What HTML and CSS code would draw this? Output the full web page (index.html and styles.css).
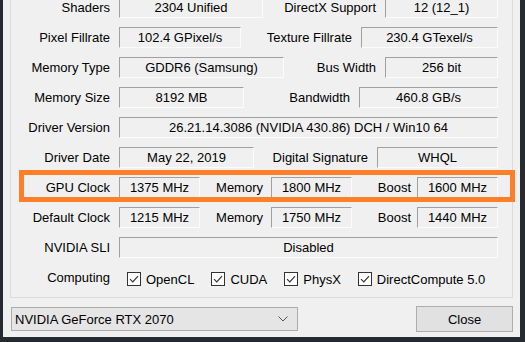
FILE: index.html
```html
<!DOCTYPE html>
<html lang="en">
<head>
  <meta charset="UTF-8">
  <title>GPU-Z</title>
  <link rel="stylesheet" href="styles.css">
</head>
<body>
  <div class="window">
    <div class="group">
      <div class="row">
        <span class="label">Shaders</span>
        <span class="field w144">2304 Unified</span>
        <span class="label2">DirectX Support</span>
        <span class="field w113">12 (12_1)</span>
      </div>
      <div class="row">
        <span class="label">Pixel Fillrate</span>
        <span class="field w122">102.4 GPixel/s</span>
        <span class="label2">Texture Fillrate</span>
        <span class="field w137">230.4 GTexel/s</span>
      </div>
      <div class="row">
        <span class="label">Memory Type</span>
        <span class="field w165">GDDR6 (Samsung)</span>
        <span class="label2">Bus Width</span>
        <span class="field w113">256 bit</span>
      </div>
      <div class="row">
        <span class="label">Memory Size</span>
        <span class="field w125">8192 MB</span>
        <span class="label2">Bandwidth</span>
        <span class="field w139">460.8 GB/s</span>
      </div>
      <div class="row">
        <span class="label">Driver Version</span>
        <span class="field wide">26.21.14.3086 (NVIDIA 430.86) DCH / Win10 64</span>
      </div>
      <div class="row">
        <span class="label">Driver Date</span>
        <span class="field w135">May 22, 2019</span>
        <span class="label2">Digital Signature</span>
        <span class="field w121">WHQL</span>
      </div>
      <div class="row">
        <span class="label">GPU Clock</span>
        <span class="field w81">1375 MHz</span>
        <span class="label-mem">Memory</span>
        <span class="field w81">1800 MHz</span>
        <span class="label-boost">Boost</span>
        <span class="field w81">1600 MHz</span>
      </div>
      <div class="row">
        <span class="label">Default Clock</span>
        <span class="field w81">1215 MHz</span>
        <span class="label-mem">Memory</span>
        <span class="field w81">1750 MHz</span>
        <span class="label-boost">Boost</span>
        <span class="field w81">1440 MHz</span>
      </div>
      <div class="row">
        <span class="label">NVIDIA SLI</span>
        <span class="field wide">Disabled</span>
      </div>
      <div class="row">
        <span class="label">Computing</span>
        <div class="checks">
          <span class="check"><span class="box"><svg viewBox="0 0 12 12"><path d="M2 6.2 L4.8 9 L10 3.2" fill="none" stroke="#333" stroke-width="1.2"/></svg></span>OpenCL</span>
          <span class="check"><span class="box"><svg viewBox="0 0 12 12"><path d="M2 6.2 L4.8 9 L10 3.2" fill="none" stroke="#333" stroke-width="1.2"/></svg></span>CUDA</span>
          <span class="check"><span class="box"><svg viewBox="0 0 12 12"><path d="M2 6.2 L4.8 9 L10 3.2" fill="none" stroke="#333" stroke-width="1.2"/></svg></span>PhysX</span>
          <span class="check"><span class="box"><svg viewBox="0 0 12 12"><path d="M2 6.2 L4.8 9 L10 3.2" fill="none" stroke="#333" stroke-width="1.2"/></svg></span>DirectCompute 5.0</span>
        </div>
      </div>
    </div>

    <div class="bottom">
      <div class="select">
        <span>NVIDIA GeForce RTX 2070</span>
        <svg class="chevron" viewBox="0 0 10 6"><path d="M0.5 0.5 L5 5 L9.5 0.5" fill="none" stroke="#555" stroke-width="1"/></svg>
      </div>
      <button class="button">Close</button>
    </div>

    <!-- highlight box drawn over the clock row -->
    <div class="highlight"></div>
  </div>
</body>
</html>
```

FILE: styles.css
```css
body {
  margin: 0;
  background-color: #262b31;
  font-family: 'Liberation Sans', Arial, sans-serif;
  font-size: 13px;
  color: #000;
  overflow: hidden;
}

.window {
  position: relative;
  margin-left: 3px;
  width: 517px;
  height: 337px;
  background-color: #f0f0f0;
  overflow: hidden;
}

.group {
  margin: -8px 0 0 7px;
  width: 503px;
  box-sizing: border-box;
  border: 1px solid #dcdcdc;
  border-top: none;
  padding: 0 14px 5px 0;
}

.row {
  display: flex;
  height: 30px;
}

.label {
  width: 99px;
  margin-right: 9px;
  text-align: right;
  line-height: 21px;
  margin-top: 5px;
  white-space: nowrap;
}

.label2 {
  flex: 1;
  padding-right: 9px;
  text-align: right;
  line-height: 21px;
  margin-top: 5px;
  white-space: nowrap;
}

.label-mem,
.label-boost {
  box-sizing: border-box;
  text-align: right;
  line-height: 21px;
  margin-top: 5px;
}

.label-mem {
  width: 71px;
  padding-right: 8px;
}

.label-boost {
  width: 65px;
  padding-right: 6px;
}

.field {
  box-sizing: border-box;
  height: 21px;
  margin-top: 5px;
  border: 1px solid;
  border-color: #a0a0a0 #fcfcfc #fcfcfc #a0a0a0;
  text-align: center;
  line-height: 19px;
  white-space: nowrap;
}

.wide { flex: 1; }
.w81 { width: 81px; }
.w113 { width: 113px; }
.w121 { width: 121px; }
.w122 { width: 122px; }
.w125 { width: 125px; }
.w135 { width: 135px; }
.w137 { width: 137px; }
.w139 { width: 139px; }
.w144 { width: 144px; }
.w165 { width: 165px; }

.checks {
  display: flex;
  gap: 17px;
  margin-left: 8px;
  margin-top: 10px;
}

.check {
  display: flex;
  align-items: center;
  gap: 5px;
  height: 14px;
  white-space: nowrap;
}

.box {
  box-sizing: border-box;
  width: 14px;
  height: 14px;
  border: 1px solid #333;
  background-color: #fff;
  display: flex;
}

.box svg {
  width: 12px;
  height: 12px;
}

.bottom {
  display: flex;
  justify-content: space-between;
  align-items: center;
  margin: 8px 7px 0 8px;
}

.select {
  box-sizing: border-box;
  width: 287px;
  height: 24px;
  border: 1px solid #acacac;
  background-color: #e5e5e5;
  display: flex;
  align-items: center;
  justify-content: space-between;
  padding: 0 9px 0 3px;
  font-size: 13px;
}

.chevron {
  width: 10px;
  height: 6px;
}

.button {
  box-sizing: border-box;
  width: 97px;
  height: 26px;
  border: 1px solid #adadad;
  background-color: #e1e1e1;
  font-family: inherit;
  font-size: 13px;
  color: #000;
  padding: 0;
}

.highlight {
  position: absolute;
  left: 16px;
  top: 170px;
  width: 496px;
  height: 32px;
  box-sizing: border-box;
  border: 5px solid #fe7f27;
}
```
